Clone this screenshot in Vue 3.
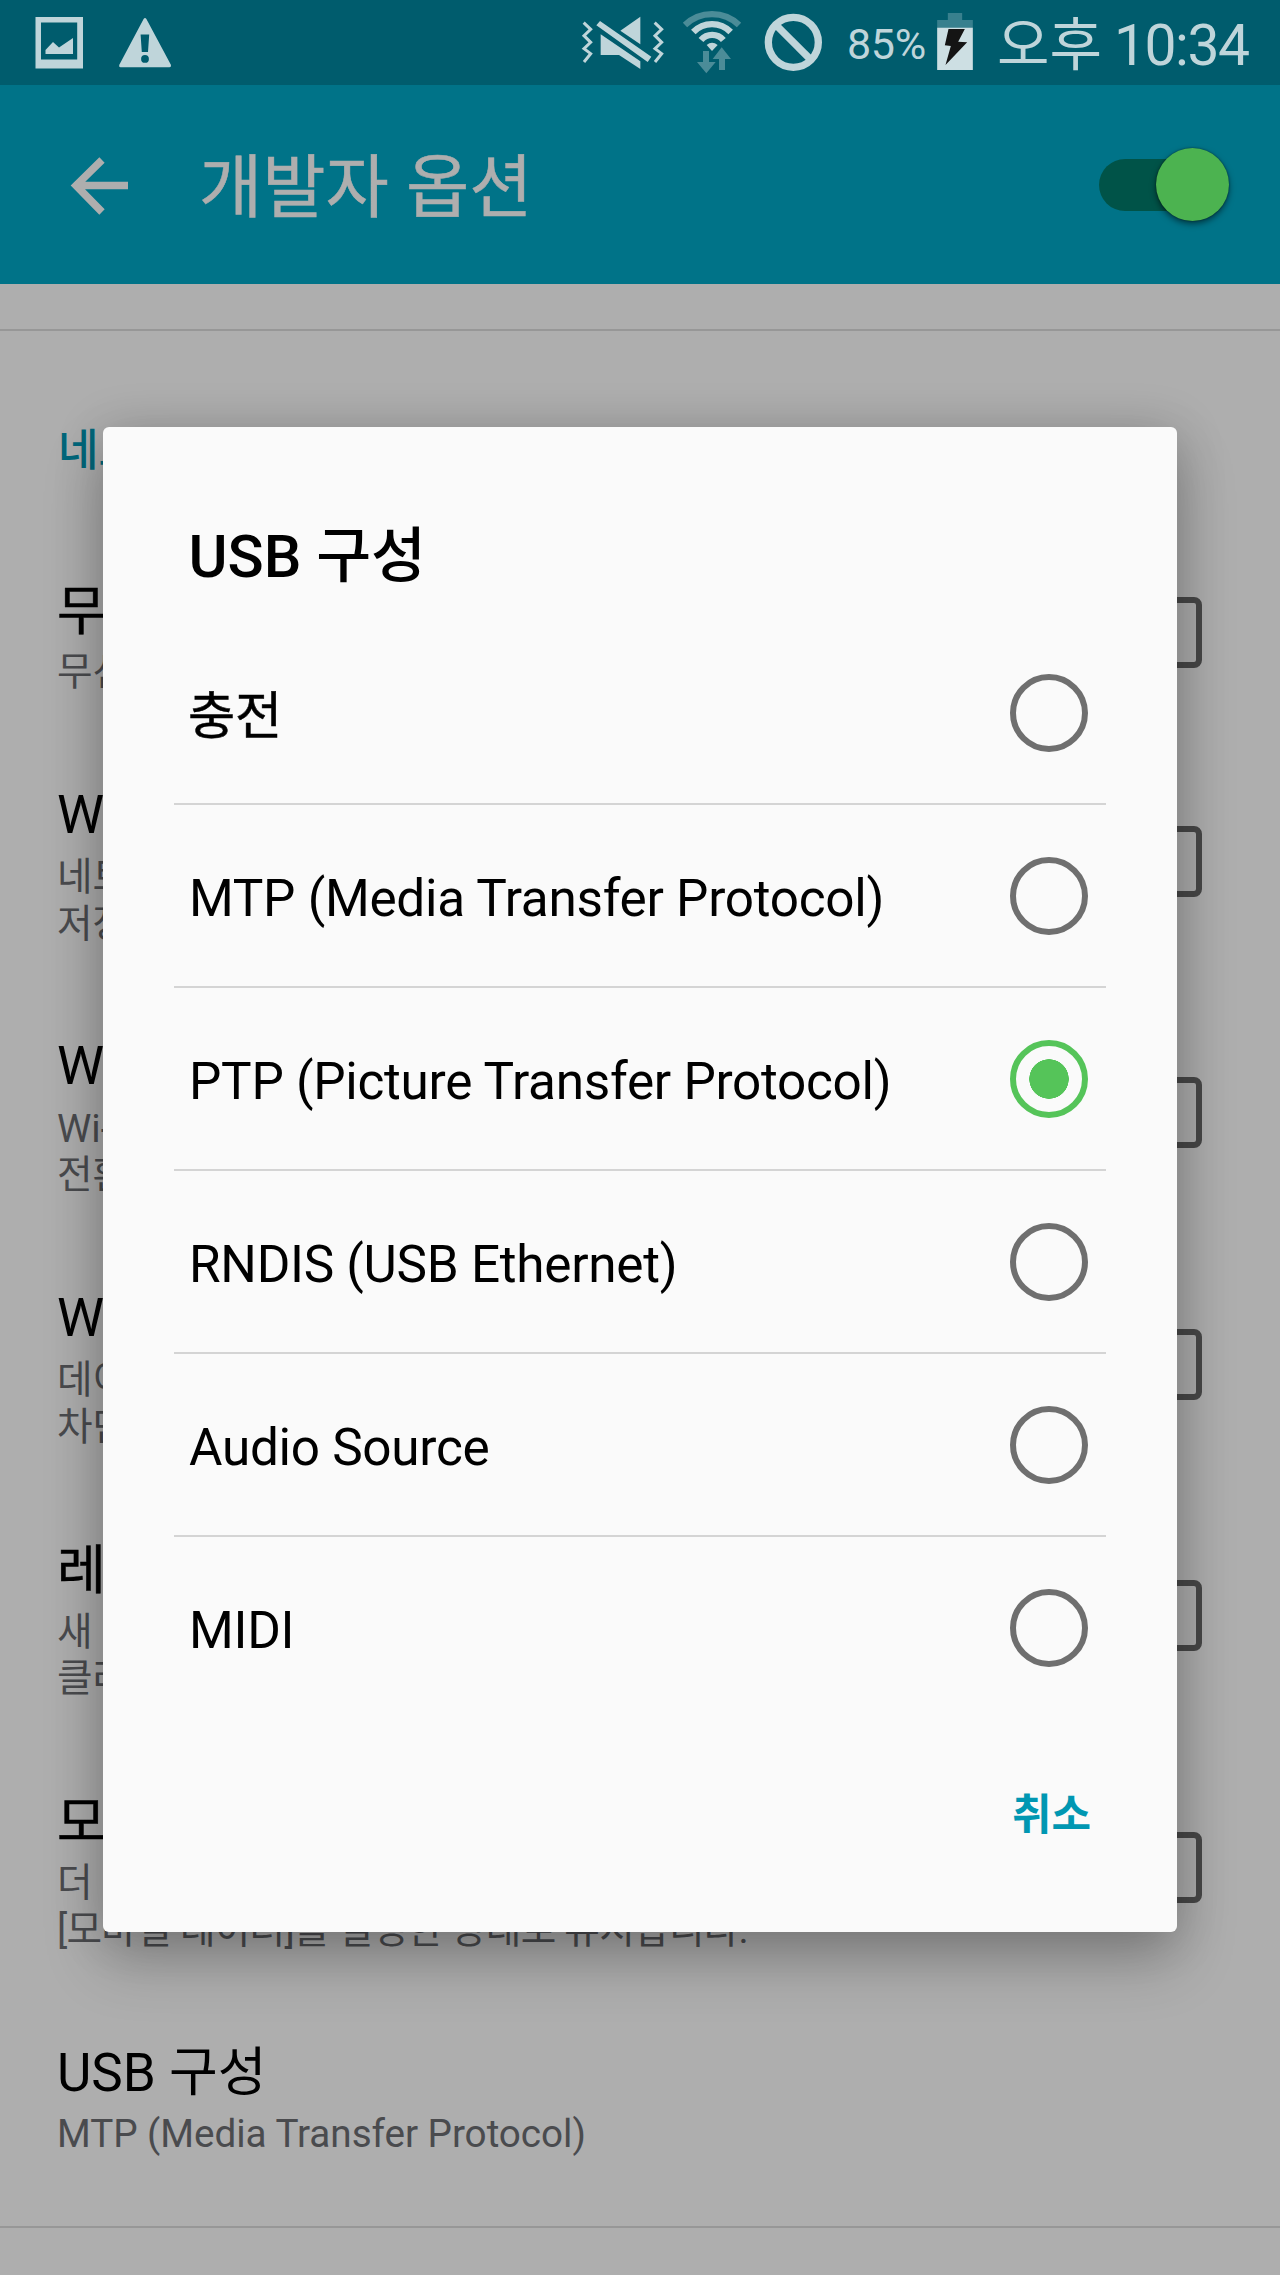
<script setup>
const rows = [
  { title: '무선', lines: ['무선'], check: true, ko: true },
  { title: 'Wi-Fi', lines: ['네트워', '저장합'], check: true },
  { title: 'Wi-Fi', lines: ['Wi-Fi', '전환'], check: true },
  { title: 'Wi-Fi', lines: ['데이터', '차단'], check: true },
  { title: '레거', lines: ['새 클', '클라'], check: true, ko: true },
  { title: '모바', lines: ['더 빠', '[모바일 데이터]를 설정한 상태로 유지합니다.'], check: true, ko: true },
  { title: 'USB 구성', lines: ['MTP (Media Transfer Protocol)'], check: false, usb: true }
]
const options = [
  '충전',
  'MTP (Media Transfer Protocol)',
  'PTP (Picture Transfer Protocol)',
  'RNDIS (USB Ethernet)',
  'Audio Source',
  'MIDI'
]
const selected = 2
</script>

<template>
  <div class="screen">
    <header class="status">
      <svg class="i-pic" viewBox="35 16 49 53" width="49" height="53">
        <path fill-rule="evenodd" d="M35.5 17H83V68.5H35.5ZM41 22.5V59.5H77.2V22.5Z" />
        <path d="M45.5 54V50L53 42L59 47.5L73 38V54Z" />
      </svg>
      <svg class="i-warn" viewBox="118 17 54 51" width="54" height="51">
        <path fill-rule="evenodd" d="M143.6 19Q145 17 146.4 19L171 65Q171.300 67.300 169.500 67.300H120.500Q118.700 67.300 119.200 65ZM140.600 34.500L141.800 52H148L149.200 34.500ZM145 55A3.900 3.900 0 1 0 145 62.800A3.900 3.900 0 1 0 145 55Z" />
      </svg>
      <span class="grow"></span>
      <svg class="i-mute" viewBox="64 45 252 165" width="84" height="55">
        <path class="zig" d="M72 68L93 88L73 107L93 127L73 146L93 161L73 186" />
        <path class="zig" d="M285 68L306 88L286 107L306 127L286 146L306 161L286 186" />
        <path d="M182 92L242 50V133ZM123 103L242 184V207L178 165H123ZM121 63L275 170L264 186L110 76Z" />
      </svg>
      <svg class="i-wifi" viewBox="366 30 180 192" width="60" height="64">
        <path class="arc faded" d="M375 75A117 117 0 0 1 537 75" />
        <path class="arc" d="M400 96A78 78 0 0 1 512 96" />
        <path class="arc" d="M423 120A44 44 0 0 1 490 120" />
        <path d="M440 135Q456 122 473 135L456 153Z" />
        <path class="dim" d="M429 153H447V186H467L439 220L411 186H429ZM485 142L513 177H495V210H477V177H458Z" />
      </svg>
      <svg class="i-block" viewBox="613 39 177 177" width="59" height="59">
        <circle cx="701" cy="127" r="75" />
        <path d="M652 78L750 176" />
      </svg>
      <span class="pct">85%</span>
      <svg class="i-batt" viewBox="111 39 107 171" width="36" height="57">
        <path class="cap" d="M143 39H186V60H218V84H111V60H143Z" />
        <path class="body" d="M111 83H218V210H111Z" />
        <path class="bolt" d="M145 87H194L174 125L201 127L136 195L152 138L134 136Z" />
      </svg>
      <span class="time">오후 <span class="digits">10:34</span></span>
    </header>

    <div class="appbar">
      <svg class="back" viewBox="70 154 60 60" width="60" height="60">
        <path d="M102 159L76 184.500L102 211M76 184.500H128" />
      </svg>
      <h1>개발자 옵션</h1>
      <div class="switch"><i></i></div>
    </div>

    <main>
      <div class="rule first"></div>
      <div class="section">네트</div>
      <div v-for="(r, n) in rows" :key="n" class="row" :class="{ short: r.lines.length === 1 }">
        <div class="txt">
          <div class="t" :class="{ ko: r.ko, usb: r.usb }">{{ r.title }}</div>
          <div v-for="l in r.lines" :key="l" class="s" :class="{ usb: r.usb, long: l.length > 12 && !r.usb }">{{ l }}</div>
        </div>
        <div v-if="r.check" class="box"></div>
      </div>
      <div class="rule last"></div>
    </main>

    <div class="dialog">
      <h2>USB 구성</h2>
      <div v-for="(o, n) in options" :key="o" class="opt">
        <span :class="{ ko: n === 0 }">{{ o }}</span>
        <b class="radio" :class="{ on: n === selected }"></b>
      </div>
      <div class="actions">취소</div>
    </div>
  </div>
</template>

<style>
body { margin: 0; background: #aeaeae; }
</style>

<style scoped>
.screen {
  position: relative;
  width: 1280px;
  height: 2275px;
  overflow: hidden;
  background: #aeaeae;
  font-family: Roboto, "Noto Sans CJK KR", sans-serif;
  color: #000;
}
.status {
  display: flex;
  align-items: flex-start;
  box-sizing: border-box;
  height: 85px;
  padding: 0 30px 0 35px;
  background: #005c6d;
  color: #bfd5da;
}
.status svg { flex: none; fill: #bfd5da; }
.grow { flex: 1; }
.i-pic { margin-top: 16px; }
.i-warn { margin: 17px 0 0 34px; }
.i-mute { margin: 15px 17px 0 0; }
.i-wifi { margin: 10px 22px 0 0; }
.i-block { margin: 13px 24px 0 0; }
.status .i-block { fill: none; stroke: #bfd5da; stroke-width: 22; }
.zig { fill: none; stroke: #bfd5da; stroke-width: 9; }
.arc { fill: none; stroke: #bfd5da; stroke-width: 19; }
.status .faded { stroke: #4b8c98; }
.dim { fill: #4b8c98; }
.pct { width: 79px; margin-right: 11px; font-size: 43px; letter-spacing: -.3px; line-height: 88px; white-space: nowrap; }
.i-batt { margin: 13px 24px 0 0; }
.cap { fill: #38808e; }
.body { fill: #cddfe3; }
.bolt { fill: #141414; }
.time { width: 253px; font-size: 57px; line-height: 91px; white-space: nowrap; }
.digits { margin-left: -2px; letter-spacing: -1.500px; }

.appbar {
  display: flex;
  align-items: center;
  box-sizing: border-box;
  height: 199px;
  padding: 0 50px 0 70px;
  background: #007388;
}
.back { flex: none; fill: none; stroke: #aeaeae; stroke-width: 7.500; }
h1 {
  flex: 1;
  margin: 0 0 0 69px;
  padding-top: 8px;
  color: #aeaeae;
  font-size: 68.800px;
  font-weight: 400;
  line-height: 100px;
  -webkit-text-stroke: .5px #aeaeae;
}
.switch { width: 131px; height: 52px; border-radius: 26px; background: linear-gradient(90deg, #005348 105px, transparent 105px); }
.switch i {
  display: block;
  width: 73px;
  height: 73px;
  margin: -10.500px 0 0 57px;
  border-radius: 50%;
  background: #4cb350;
  box-shadow: 0 3px 6px rgba(0, 0, 0, .5), 0 0 2px rgba(0, 0, 0, .5);
}

.rule { height: 2px; background: #979797; }
.first { margin-top: 45px; }
.last { margin-top: 27px; }
.section {
  box-sizing: border-box;
  height: 199px;
  padding: 93px 0 0 58px;
  color: #00677b;
  font-size: 44px;
  font-weight: 500;
  line-height: 54px;
}
.row {
  display: flex;
  align-items: center;
  justify-content: space-between;
  height: 251.500px;
  padding: 0 78px 0 57px;
}
.row.short { height: 205.500px; }
.t { position: relative; font-size: 53px; line-height: 70px; white-space: nowrap; }
.t.ko { top: 2px; -webkit-text-stroke: .5px #000; }
.s { position: relative; top: 4.500px; color: #4a4b4e; font-size: 38.700px; line-height: 46.500px; white-space: nowrap; }
.s.usb { top: 3.500px; letter-spacing: -.05px; }
.s.long { letter-spacing: -.75px; }
.box { box-sizing: border-box; width: 71px; height: 71px; border: 6px solid #484848; border-radius: 8px; }

.dialog {
  position: absolute;
  left: 103px;
  top: 427px;
  box-sizing: border-box;
  width: 1074px;
  height: 1505px;
  padding: 95px 71px 0;
  border-radius: 6px;
  background: #fafafa;
  box-shadow: 0 30px 60px rgba(0, 0, 0, .22), 0 4px 50px rgba(0, 0, 0, .18);
}
h2 { height: 100px; margin: 0; padding-left: 14.500px; font-size: 59.700px; font-weight: 500; line-height: 71px; }
.opt {
  display: flex;
  align-items: center;
  justify-content: space-between;
  box-sizing: border-box;
  height: 183px;
  padding: 0 18px 0 15px;
  border-bottom: 2px solid #d4d4d4;
  font-size: 51.300px;
  letter-spacing: -.28px;
}
.opt span { padding-top: 7px; line-height: 64px; }
.opt span.ko { margin-left: -1px; padding-top: 8px; -webkit-text-stroke: .5px #000; }
.opt:nth-of-type(6) { border-bottom-color: transparent; }
.radio { box-sizing: border-box; width: 78px; height: 78px; border: 6px solid #6f6f6f; border-radius: 50%; }
.radio.on { border-color: #55c459; background: radial-gradient(circle, #55c459 19.500px, transparent 20px); }
.actions { padding: 65px 15px 0 0; color: #0097b2; font-size: 43px; font-weight: 700; line-height: 60px; text-align: right; }
</style>
